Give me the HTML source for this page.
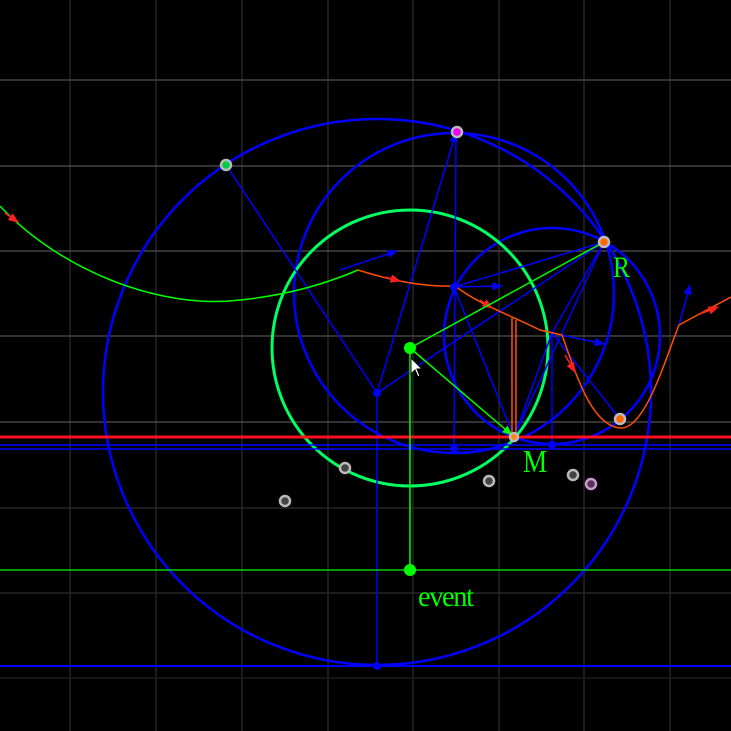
<!DOCTYPE html>
<html><head><style>html,body{margin:0;padding:0;background:#000;width:731px;height:731px;overflow:hidden}</style></head>
<body>
<svg width="731" height="731" viewBox="0 0 731 731" xmlns="http://www.w3.org/2000/svg">
<defs>
<marker id="ab" viewBox="0 0 10 10" refX="9" refY="5" markerWidth="7" markerHeight="7" orient="auto"><path d="M0,1 L10,5 L0,9 z" fill="#0000ff"/></marker>
<marker id="ar" viewBox="0 0 10 10" refX="9" refY="5" markerWidth="7" markerHeight="7" orient="auto"><path d="M0,1 L10,5 L0,9 z" fill="#ff2020"/></marker>
<marker id="ag" viewBox="0 0 10 10" refX="9" refY="5" markerWidth="7" markerHeight="7" orient="auto"><path d="M0,1 L10,5 L0,9 z" fill="#00ff00"/></marker>
</defs>
<g stroke="#262626" stroke-width="1.5">
<line x1="70" y1="0" x2="70" y2="731"/><line x1="156" y1="0" x2="156" y2="731"/><line x1="242" y1="0" x2="242" y2="731"/><line x1="328" y1="0" x2="328" y2="731"/><line x1="413" y1="0" x2="413" y2="731"/><line x1="499" y1="0" x2="499" y2="731"/><line x1="584" y1="0" x2="584" y2="731"/><line x1="670" y1="0" x2="670" y2="731"/>
<line x1="0" y1="593" x2="731" y2="593"/><line x1="0" y1="508" x2="731" y2="508"/><line x1="0" y1="678" x2="731" y2="678" stroke="#1a1a1a"/>
</g>
<g stroke="#444" stroke-width="1.5">
<line x1="0" y1="80" x2="731" y2="80"/><line x1="0" y1="166" x2="731" y2="166"/><line x1="0" y1="251" x2="731" y2="251"/><line x1="0" y1="336" x2="731" y2="336"/><line x1="0" y1="422" x2="731" y2="422"/>
</g>
<g fill="none" stroke="#0000ff" stroke-width="2.5">
<ellipse cx="377" cy="392" rx="274" ry="273"/>
<circle cx="454" cy="293" r="160"/>
<circle cx="552" cy="336" r="108"/>
</g>
<circle cx="410" cy="348" r="138" fill="none" stroke="#00ff60" stroke-width="3"/>
<g stroke="#0000ff" stroke-width="1.5" fill="none">
<line x1="0" y1="445" x2="731" y2="445"/><line x1="0" y1="449" x2="731" y2="449"/>
<line x1="0" y1="666" x2="731" y2="666" stroke-width="2"/>
<line x1="377" y1="393" x2="377" y2="666"/>
<line x1="226" y1="165" x2="377" y2="393"/>
<line x1="377" y1="393" x2="456" y2="133" marker-end="url(#ab)"/>
<line x1="377" y1="393" x2="604" y2="242"/>
<line x1="456" y1="133" x2="454" y2="449"/>
<line x1="454" y1="287" x2="514" y2="437"/>
<line x1="454" y1="287" x2="502" y2="286" marker-end="url(#ab)"/>
<line x1="454" y1="287" x2="604" y2="242"/>
<line x1="514" y1="437" x2="604" y2="242"/>
<line x1="514" y1="437" x2="552" y2="333"/>
<line x1="552" y1="333" x2="552" y2="445"/>
<line x1="552" y1="333" x2="604" y2="344" marker-end="url(#ab)"/>
<line x1="552" y1="333" x2="604" y2="242"/>
<line x1="552" y1="333" x2="620" y2="419"/>
<line x1="340" y1="270" x2="397" y2="251" marker-end="url(#ab)"/>
<line x1="679" y1="325" x2="690" y2="285" marker-end="url(#ab)"/>
</g>
<path d="M0,206 C60,270 160,310 240,300 C290,295 330,282 358,270" fill="none" stroke="#00ff00" stroke-width="1.5"/>
<line x1="5" y1="213" x2="18" y2="222" stroke="#ff2020" stroke-width="1.5" marker-end="url(#ar)"/>
<g fill="none" stroke="#ff5000" stroke-width="1.5">
<path d="M358,270 C390,280 420,287 455,286 C480,305 510,315 540,330 L562,335 C575,370 590,425 620,428 C645,430 665,360 679,325 L731,297"/>
<path d="M512,318 L512,437 M516,320 L516,437"/>
</g>
<line x1="385" y1="277" x2="400" y2="281" stroke="#ff2020" stroke-width="1.5" marker-end="url(#ar)"/>
<line x1="480" y1="300" x2="492" y2="308" stroke="#ff2020" stroke-width="1.5" marker-end="url(#ar)"/>
<line x1="565" y1="355" x2="575" y2="372" stroke="#ff2020" stroke-width="1.5" marker-end="url(#ar)"/>
<line x1="700" y1="314" x2="718" y2="307" stroke="#ff2020" stroke-width="1.5" marker-end="url(#ar)"/>
<line x1="0" y1="437" x2="731" y2="437" stroke="#ff1020" stroke-width="3"/>
<line x1="0" y1="570" x2="731" y2="570" stroke="#00d000" stroke-width="1.5"/>
<g stroke="#00ff00" stroke-width="1.5">
<line x1="410" y1="348" x2="410" y2="570"/>
<line x1="410" y1="348" x2="604" y2="242"/>
<line x1="410" y1="348" x2="512" y2="435" marker-end="url(#ag)"/>
</g>
<g fill="#0000ff">
<circle cx="377" cy="393" r="4"/><circle cx="454" cy="287" r="4"/><circle cx="454" cy="449" r="4"/><circle cx="552" cy="445" r="4"/><circle cx="377" cy="666" r="4"/>
</g>
<circle cx="410" cy="348" r="6" fill="#00ff00"/>
<circle cx="410" cy="570" r="6" fill="#00ff00"/>
<g stroke="#bbb" stroke-width="2.5" fill="#556">
<circle cx="226" cy="165" r="5" fill="#0c4"/>
<circle cx="457" cy="132" r="5" fill="#e0e"/>
<circle cx="604" cy="242" r="5" fill="#f60"/>
<circle cx="620" cy="419" r="5" fill="#f60"/>
<circle cx="514" cy="437" r="4" fill="#f80"/>
<circle cx="345" cy="468" r="5" fill="#444"/>
<circle cx="285" cy="501" r="5" fill="#444"/>
<circle cx="489" cy="481" r="5" fill="#444"/>
<circle cx="573" cy="475" r="5" fill="#444"/>
<circle cx="591" cy="484" r="5" fill="#535" stroke="#c9c"/>
</g>
<path d="M411,358 L411,374 L415,370 L418,377 L420,376 L417,369 L422,369 z" fill="#fff" stroke="#000" stroke-width="1"/>
<g font-family="Liberation Serif, serif" fill="#00ff00" font-size="32">
<text x="523" y="472" transform="translate(523 472) scale(0.85 1) translate(-523 -472)">M</text>
<text x="613" y="277" font-size="30" transform="translate(613 277) scale(0.85 1) translate(-613 -277)">R</text>
<text x="418" y="606" font-size="30" letter-spacing="-1.5" transform="translate(418 606) scale(0.95 1) translate(-418 -606)">event</text>
</g>
</svg>
</body></html>
